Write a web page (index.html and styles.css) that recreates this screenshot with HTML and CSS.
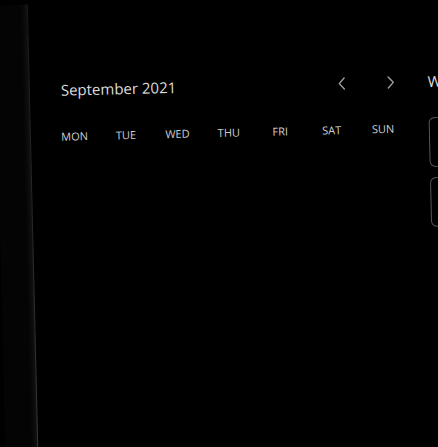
FILE: index.html
```html
<!DOCTYPE html>
<html lang="en">
<head>
<meta charset="utf-8">
<title>Calendar</title>
<link rel="stylesheet" href="styles.css">
</head>
<body>
<div class="stage">
  <aside class="sidebar"></aside>
  <main class="main">
    <section class="calendar">
      <header class="cal-header">
        <h2 class="month">September 2021</h2>
        <nav class="nav">
          <button class="nav-btn" aria-label="Previous month">
            <svg width="8" height="13" viewBox="0 0 8 13"><path d="M6.5 1 L1.5 6.5 L6.5 12" fill="none" stroke="#a0a0a0" stroke-width="1.4" stroke-linecap="round" stroke-linejoin="round"/></svg>
          </button>
          <button class="nav-btn" aria-label="Next month">
            <svg width="8" height="13" viewBox="0 0 8 13"><path d="M1.5 1 L6.5 6.5 L1.5 12" fill="none" stroke="#a0a0a0" stroke-width="1.4" stroke-linecap="round" stroke-linejoin="round"/></svg>
          </button>
        </nav>
      </header>
      <div class="weekdays">
        <span>MON</span><span>TUE</span><span>WED</span><span>THU</span><span>FRI</span><span>SAT</span><span>SUN</span>
      </div>
    </section>
    <section class="side">
      <h2 class="side-title">Week</h2>
      <div class="slot"></div>
      <div class="slot"></div>
    </section>
  </main>
</div>
</body>
</html>
```
FILE: styles.css
```css
* { box-sizing: border-box; }
html, body {
  margin: 0;
  padding: 0;
  background: #000;
  overflow: hidden;
}
body {
  width: 438px;
  height: 447px;
  font-family: "Open Sans", "Liberation Sans", sans-serif;
}
.stage {
  width: 438px;
  height: 447px;
  display: flex;
  background: #000;
  transform: rotate(-1.35deg);
}
.sidebar {
  width: 33px;
  flex: none;
  background: #040404;
  border-right: 1px solid #2a2a2a;
  border-image: linear-gradient(#181818, #3a3a3a) 1;
  box-shadow: inset -6px 0 6px -4px rgba(255, 255, 255, 0.08);
}
.main {
  flex: 1;
  display: flex;
  padding-left: 18px;
  min-width: 0;
}
.calendar {
  width: 360px;
  flex: none;
  padding-top: 76px;
}
.cal-header {
  display: flex;
  align-items: center;
  justify-content: space-between;
  height: 20px;
  padding: 0 7px 0 13px;
}
.month {
  margin: 0;
  font-size: 15px;
  font-weight: 400;
  line-height: 20px;
  color: #dcdcdc;
}
.nav {
  display: flex;
  gap: 29px;
}
.nav-btn {
  width: 20px;
  height: 20px;
  padding: 0;
  border: 0;
  background: none;
  display: flex;
  align-items: center;
  justify-content: center;
}
.weekdays {
  display: grid;
  grid-template-columns: repeat(7, 1fr);
  margin-top: 30px;
  font-size: 11px;
  line-height: 14px;
  color: #cfcfcf;
  text-align: center;
}
.side {
  flex: none;
  width: 120px;
  margin-left: 20px;
  padding-top: 76px;
}
.side-title {
  margin: 0;
  font-size: 15px;
  font-weight: 400;
  line-height: 20px;
  color: #dcdcdc;
}
.slot {
  width: 100px;
  height: 50px;
  border: 1px solid #555;
  border-radius: 6px;
  margin-top: 26px;
}
.slot + .slot {
  margin-top: 10px;
}
```
